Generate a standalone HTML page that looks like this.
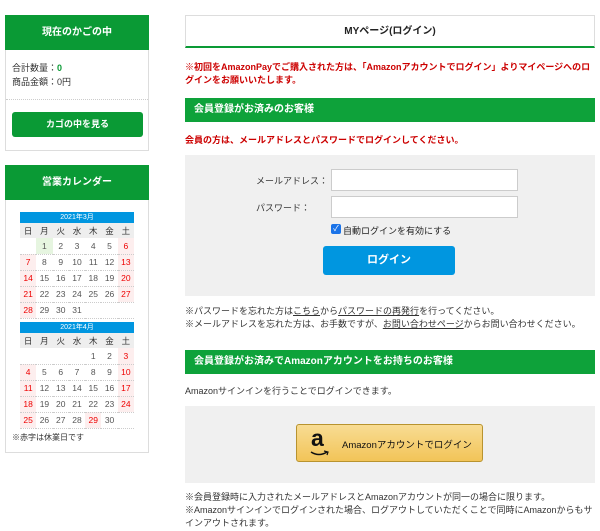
<!DOCTYPE html>
<html><head><meta charset="utf-8"><style>
*{margin:0;padding:0;box-sizing:border-box}
body{width:600px;height:531px;background:#fff;font-family:"Liberation Sans","Noto Sans CJK JP",sans-serif;font-size:9px;color:#333;position:relative;overflow:hidden}
.a{position:absolute}
.gh{background:#0a9a35;color:#fff;font-weight:bold;text-align:center}
.box{border:1px solid #ddd;border-top:none}
.t{white-space:nowrap}
.red{color:#c00;font-weight:bold}
.bar{background:#0ea23a;color:#fff;font-weight:bold;font-size:10px;padding-left:9px;line-height:24px}
table{border-collapse:collapse;width:114px;font-size:8.5px;color:#555}
td{height:16px;text-align:center;border-bottom:1px dotted #ccc}
th{height:15px;background:#eee;font-weight:normal;color:#333}
.cap{background:#0096e0;color:#fff;text-align:center;height:11px;line-height:11px;font-size:7px}
.h{background:#fdeeee;color:#e00}
.td{background:#e6f5e0}
u{text-decoration:underline}
</style></head><body>
<div class="a box" style="left:5px;top:15px;width:144px;height:136px"></div>
<div class="a gh" style="left:5px;top:15px;width:144px;height:35px;line-height:35px;font-size:10px">現在のかごの中</div>
<div class="a t" style="left:12px;top:61px">合計数量：<b style="color:#0a9a35">0</b></div>
<div class="a t" style="left:12px;top:75px">商品金額：0円</div>
<div class="a" style="left:6px;top:99px;width:142px;border-top:1px dotted #ccc"></div>
<div class="a gh" style="left:12px;top:112px;width:131px;height:25px;line-height:25px;border-radius:3px;font-size:9px">カゴの中を見る</div>
<div class="a box" style="left:5px;top:165px;width:144px;height:288px"></div>
<div class="a gh" style="left:5px;top:165px;width:144px;height:35px;line-height:35px;font-size:10px">営業カレンダー</div>
<div class="a" style="left:20px;top:212px">
<div class="cap" style="width:114px">2021年3月</div>
<table><tr><th>日</th><th>月</th><th>火</th><th>水</th><th>木</th><th>金</th><th>土</th></tr>
<tr><td></td><td class="td">1</td><td>2</td><td>3</td><td>4</td><td>5</td><td class="h">6</td></tr>
<tr><td class="h">7</td><td>8</td><td>9</td><td>10</td><td>11</td><td>12</td><td class="h">13</td></tr>
<tr><td class="h">14</td><td>15</td><td>16</td><td>17</td><td>18</td><td>19</td><td class="h">20</td></tr>
<tr><td class="h">21</td><td>22</td><td>23</td><td>24</td><td>25</td><td>26</td><td class="h">27</td></tr>
<tr><td class="h">28</td><td>29</td><td>30</td><td>31</td><td></td><td></td><td></td></tr></table>
</div>
<div class="a" style="left:20px;top:322px">
<div class="cap" style="width:114px">2021年4月</div>
<table><tr><th>日</th><th>月</th><th>火</th><th>水</th><th>木</th><th>金</th><th>土</th></tr>
<tr><td></td><td></td><td></td><td></td><td>1</td><td>2</td><td class="h">3</td></tr>
<tr><td class="h">4</td><td>5</td><td>6</td><td>7</td><td>8</td><td>9</td><td class="h">10</td></tr>
<tr><td class="h">11</td><td>12</td><td>13</td><td>14</td><td>15</td><td>16</td><td class="h">17</td></tr>
<tr><td class="h">18</td><td>19</td><td>20</td><td>21</td><td>22</td><td>23</td><td class="h">24</td></tr>
<tr><td class="h">25</td><td>26</td><td>27</td><td>28</td><td class="h">29</td><td>30</td><td></td></tr></table>
</div>
<div class="a t" style="left:12px;top:432px;font-size:8px">※赤字は休業日です</div>
<div class="a" style="left:185px;top:15px;width:410px;height:33px;border:1px solid #ddd;border-bottom:2px solid #0a9a35;text-align:center;line-height:31px;font-weight:bold;font-size:10px;color:#222">MYページ(ログイン)</div>
<div class="a red" style="left:185px;top:61px;width:412px;line-height:13px">※初回をAmazonPayでご購入された方は、「Amazonアカウントでログイン」よりマイページへのログインをお願いいたします。</div>
<div class="a bar" style="left:185px;top:98px;width:410px">会員登録がお済みのお客様</div>
<div class="a red t" style="left:185px;top:133px">会員の方は、メールアドレスとパスワードでログインしてください。</div>
<div class="a" style="left:185px;top:155px;width:410px;height:141px;background:#f0f0f0"></div>
<div class="a t" style="left:256px;top:174px">メールアドレス：</div>
<div class="a" style="left:331px;top:169px;width:187px;height:22px;background:#fff;border:1px solid #ccc"></div>
<div class="a t" style="left:256px;top:201px">パスワード：</div>
<div class="a" style="left:331px;top:196px;width:187px;height:22px;background:#fff;border:1px solid #ccc"></div>
<div class="a" style="left:331px;top:224px;width:10px;height:10px;background:#1a73e8;border-radius:2px;color:#fff;font-size:8px;line-height:10px;text-align:center">✓</div>
<div class="a t" style="left:343px;top:224px;color:#222">自動ログインを有効にする</div>
<div class="a" style="left:323px;top:246px;width:132px;height:29px;background:#0096e0;border-radius:3px;color:#fff;font-weight:bold;font-size:11px;text-align:center;line-height:29px">ログイン</div>
<div class="a t" style="left:185px;top:305px;line-height:13px">※パスワードを忘れた方は<u>こちら</u>から<u>パスワードの再発行</u>を行ってください。<br>※メールアドレスを忘れた方は、お手数ですが、<u>お問い合わせページ</u>からお問い合わせください。</div>
<div class="a bar" style="left:185px;top:350px;width:410px">会員登録がお済みでAmazonアカウントをお持ちのお客様</div>
<div class="a t" style="left:185px;top:384px">Amazonサインインを行うことでログインできます。</div>
<div class="a" style="left:185px;top:406px;width:410px;height:77px;background:#f0f0f0"></div>
<div class="a" style="left:296px;top:424px;width:187px;height:38px;background:linear-gradient(#f8dc93,#f2c458);border:1px solid #b8932f;border-radius:3px"></div>
<div class="a t" style="left:311px;top:425px;font-size:23px;font-weight:bold;color:#111;font-family:'Liberation Sans',sans-serif">a</div>
<svg class="a" style="left:309px;top:450px" width="22" height="8"><path d="M2 2 Q10 7 18 2" stroke="#111" stroke-width="1.6" fill="none"/><path d="M15 1 L19 2 L18 5" stroke="#111" stroke-width="1.2" fill="none"/></svg>
<div class="a t" style="left:342px;top:437px;font-size:9.5px;color:#111">Amazonアカウントでログイン</div>
<div class="a" style="left:185px;top:491px;width:412px;line-height:13px">※会員登録時に入力されたメールアドレスとAmazonアカウントが同一の場合に限ります。<br>※Amazonサインインでログインされた場合、ログアウトしていただくことで同時にAmazonからもサインアウトされます。</div>
</body></html>
